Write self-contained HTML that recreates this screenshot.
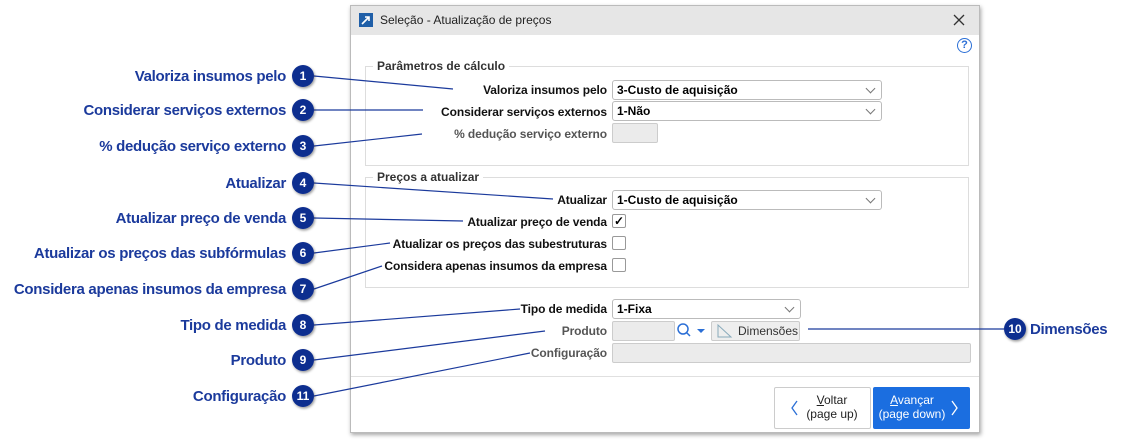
<!DOCTYPE html>
<html><head><meta charset="utf-8"><style>
*{margin:0;padding:0;box-sizing:border-box}
body{width:1126px;height:441px;background:#fff;position:relative;overflow:hidden;font-family:"Liberation Sans",sans-serif}
.a{position:absolute}
.cl{position:absolute;right:840px;font-size:15px;font-weight:bold;color:#1b3a9c;white-space:nowrap;letter-spacing:-0.3px}
.lb{position:absolute;right:519px;font-size:12px;font-weight:bold;color:#111;white-space:nowrap;letter-spacing:-0.1px}
.lb.g{color:#555}
.sel{position:absolute;border:1px solid #bbb;border-radius:3px;background:#fff;font-size:12px;font-weight:bold;padding:2px 4px;height:20px}
.sel:after{content:"";position:absolute;right:7px;top:4px;width:6px;height:6px;border-right:1px solid #777;border-bottom:1px solid #777;transform:rotate(45deg)}
.inp{position:absolute;border:1px solid #ccc;border-radius:2px;background:#ebebeb}
.cb{position:absolute;width:14px;height:14px;border:1px solid #999;border-radius:2px;background:#fff;font-size:12px;line-height:12px;text-align:center;font-weight:bold}
.grp{position:absolute;border:1px solid #ddd}
.leg{position:absolute;background:#fff;font-size:12px;font-weight:bold;color:#333;padding:0 4px}
</style></head><body>
<div class="a" style="left:350px;top:5px;width:630px;height:428px;border:1px solid #bbb;box-shadow:1px 2px 4px rgba(0,0,0,.35);background:#fff"></div>
<div class="a" style="left:351px;top:6px;width:628px;height:29px;background:#e6e6e6"></div>
<div class="a" style="left:359px;top:13px;width:14px;height:14px;background:#1f5fa8"></div>
<svg class="a" style="left:359px;top:13px" width="14" height="14"><path d="M3 11 L10 4 M6 4 H10 V8" stroke="#fff" stroke-width="1.6" fill="none"/></svg>
<div class="a" style="left:380px;top:13px;font-size:12px;color:#222">Seleção - Atualização de preços</div>
<svg class="a" style="left:952px;top:13px" width="14" height="14"><path d="M2 2 L12 12 M12 2 L2 12" stroke="#333" stroke-width="1.3"/></svg>
<div class="a" style="left:957px;top:38px;width:15px;height:15px;border:1.5px solid #2b6fd6;border-radius:50%;color:#2b6fd6;font-size:11px;text-align:center;line-height:12px;font-weight:bold">?</div>

<div class="grp" style="left:365px;top:66px;width:604px;height:100px"></div>
<div class="leg" style="left:373px;top:59px">Parâmetros de cálculo</div>
<div class="grp" style="left:365px;top:177px;width:604px;height:111px"></div>
<div class="leg" style="left:373px;top:170px">Preços a atualizar</div>

<div class="lb" style="top:83px">Valoriza insumos pelo</div>
<div class="sel" style="left:612px;top:80px;width:270px">3-Custo de aquisição</div>
<div class="lb" style="top:105px">Considerar serviços externos</div>
<div class="sel" style="left:612px;top:101px;width:270px">1-Não</div>
<div class="lb g" style="top:127px">% dedução serviço externo</div>
<div class="inp" style="left:612px;top:123px;width:46px;height:20px"></div>

<div class="lb" style="top:193px">Atualizar</div>
<div class="sel" style="left:612px;top:190px;width:270px">1-Custo de aquisição</div>
<div class="lb" style="top:215px">Atualizar preço de venda</div>
<div class="cb" style="left:612px;top:214px">✓</div>
<div class="lb" style="top:237px">Atualizar os preços das subestruturas</div>
<div class="cb" style="left:612px;top:236px"></div>
<div class="lb" style="top:259px">Considera apenas insumos da empresa</div>
<div class="cb" style="left:612px;top:258px"></div>

<div class="lb" style="top:302px">Tipo de medida</div>
<div class="sel" style="left:612px;top:299px;width:189px">1-Fixa</div>
<div class="lb g" style="top:324px">Produto</div>
<div class="inp" style="left:612px;top:321px;width:63px;height:20px"></div>
<svg class="a" style="left:676px;top:322px" width="32" height="18"><circle cx="7" cy="7" r="5" stroke="#2b6fd6" stroke-width="1.5" fill="none"/><path d="M10.5 10.5 L14 14" stroke="#2b6fd6" stroke-width="1.5"/><path d="M21 7 H29 L25 11Z" fill="#2b6fd6"/></svg>
<div class="a" style="left:711px;top:321px;width:89px;height:20px;border:1px solid #ccc;border-radius:2px;background:#eee;font-size:12px;color:#333;padding:2px 0 0 26px">Dimensões</div>
<svg class="a" style="left:716px;top:323px" width="18" height="16"><path d="M2 14 V2 L15 14Z" stroke="#8ab" fill="none"/></svg>
<div class="lb g" style="top:346px">Configuração</div>
<div class="inp" style="left:612px;top:343px;width:359px;height:20px"></div>

<div class="a" style="left:351px;top:376px;width:628px;height:1px;background:#e0e0e0"></div>
<div class="a" style="left:774px;top:387px;width:97px;height:42px;border:1px solid #ccc;border-radius:2px;background:#fff"></div>
<div class="a" style="left:800px;top:393px;width:64px;text-align:center;font-size:12px;color:#222;line-height:14px"><u>V</u>oltar<br>(page up)</div>
<svg class="a" style="left:790px;top:400px" width="10" height="16"><path d="M7 1 L2 8 L7 15" stroke="#2b6fd6" stroke-width="1.3" fill="none"/></svg>
<div class="a" style="left:873px;top:387px;width:97px;height:42px;border-radius:2px;background:#1b6ee0"></div>
<div class="a" style="left:876px;top:393px;width:72px;text-align:center;font-size:12px;color:#fff;line-height:14px"><u>A</u>vançar<br>(page down)</div>
<svg class="a" style="left:950px;top:400px" width="10" height="16"><path d="M2 1 L7 8 L2 15" stroke="#fff" stroke-width="1.3" fill="none"/></svg>

<div class="cl" style="top:68px">Valoriza insumos pelo</div>
<div class="cl" style="top:102px">Considerar serviços externos</div>
<div class="cl" style="top:138px">% dedução serviço externo</div>
<div class="cl" style="top:175px">Atualizar</div>
<div class="cl" style="top:210px">Atualizar preço de venda</div>
<div class="cl" style="top:245px">Atualizar os preços das subfórmulas</div>
<div class="cl" style="top:281px">Considera apenas insumos da empresa</div>
<div class="cl" style="top:317px">Tipo de medida</div>
<div class="cl" style="top:352px">Produto</div>
<div class="cl" style="top:388px">Configuração</div>
<div class="a" style="left:1030px;top:321px;font-size:15px;font-weight:bold;color:#1b3a9c;letter-spacing:-0.3px">Dimensões</div>

<svg class="a" style="left:0;top:0" width="1126" height="441">
<defs><filter id="s"><feDropShadow dx="1" dy="1.5" stdDeviation="1.2" flood-opacity=".4"/></filter></defs>
<g stroke="#1b3a9c" stroke-width="1.2" fill="none">
<path d="M314 76 L453 89"/><path d="M314 110 L423 110"/><path d="M314 146 L422 134"/><path d="M314 183 L553 199"/><path d="M314 218 L463 221"/><path d="M314 253 L390 243"/><path d="M314 289 L382 266"/><path d="M314 325 L520 309"/><path d="M314 360 L545 331"/><path d="M314 396 L530 353"/><path d="M1004 329 L808 329"/>
</g>
<g fill="#0f2d8f" filter="url(#s)">
<circle cx="303" cy="76" r="11"/><circle cx="303" cy="110" r="11"/><circle cx="303" cy="146" r="11"/><circle cx="303" cy="183" r="11"/><circle cx="303" cy="218" r="11"/><circle cx="303" cy="253" r="11"/><circle cx="303" cy="289" r="11"/><circle cx="303" cy="325" r="11"/><circle cx="303" cy="360" r="11"/><circle cx="303" cy="396" r="11"/><circle cx="1015" cy="329" r="11"/>
</g>
<g fill="#fff" font-family="Liberation Sans" font-weight="bold" font-size="12" text-anchor="middle">
<text x="303" y="80">1</text><text x="303" y="114">2</text><text x="303" y="150">3</text><text x="303" y="187">4</text><text x="303" y="222">5</text><text x="303" y="257">6</text><text x="303" y="293">7</text><text x="303" y="329">8</text><text x="303" y="364">9</text><text x="303" y="400">11</text><text x="1015" y="333">10</text>
</g>
</svg>
</body></html>
